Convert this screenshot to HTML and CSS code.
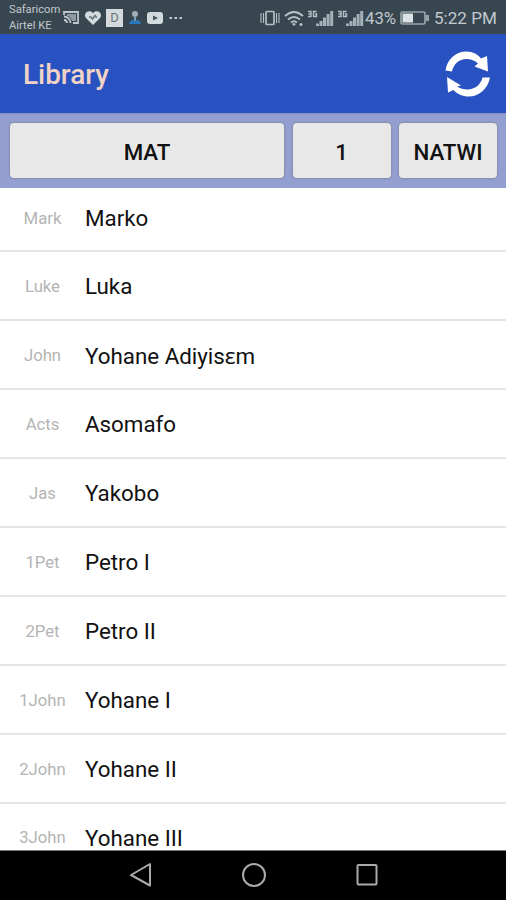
FILE: index.html
```html
<!DOCTYPE html>
<html lang="en">
<head>
<meta charset="utf-8">
<title>Library</title>
<link rel="stylesheet" href="styles.css">
</head>
<body>
<div class="screen">
  <div class="status">
    <div class="carrier"><span>Safaricom</span><span>Airtel KE</span></div>
    <div class="notifications">
      <svg width="18" height="16" viewBox="0 0 18 16"><path d="M2 5V2h14v11h-5M2 6.500a6.500 6.500 0 0 1 6.500 6.500M2 10a3 3 0 0 1 3 3" fill="none" stroke="#bdc5ca" stroke-width="1.800"/><path d="M5 4h9v7h-4Q8 6 5 6z" fill="#8d999f"/></svg>
      <svg width="18" height="16" viewBox="0 0 18 16"><path d="M9 15L2 8C-1 4 3 0 7 1.500L9 3l2-1.500C15 0 19 4 16 8z" fill="#d3dade"/><path d="M5 7h2l1.500 2L11 5.500l1 1.500h1" fill="none" stroke="#63717a" stroke-width="1.400"/></svg>
      <span class="letter">D</span>
      <svg width="16" height="16" viewBox="0 0 16 16"><circle cx="8" cy="4" r="3" fill="#9fb1b5"/><path d="M7 6h2v5H7z" fill="#7da0b4"/><path d="M2 14q1-4 5-4l1 2 1-2q4 0 5 4z" fill="#2877bd"/></svg>
      <svg class="video" width="18" height="14" viewBox="0 0 18 14"><rect x="1" y="1" width="16" height="12" rx="3" fill="#d3dade"/><path d="M7 4.500v5L12 7z" fill="#46545d"/></svg>
      <svg class="more" width="14" height="4" viewBox="0 0 14 4"><path d="M.5 2h2.500M5.500 2H8M10.500 2H13" stroke="#c3cbd0" stroke-width="2"/></svg>
    </div>
    <div class="system">
      <svg class="vibrate" width="20" height="16" viewBox="0 0 20 16"><rect x="6" y="1.500" width="8" height="13" rx="1" fill="none" stroke="#b5bfc5" stroke-width="1.700"/><path d="M3.500 3v10M16.500 3v10M1 3v10M19 3v10" stroke="#b5bfc5" stroke-width="1.100"/></svg>
      <svg class="wifi" width="20" height="17" viewBox="0 0 20 17"><path d="M1 6q9-8 18 0M4 9.500q6-5 12 0M7 12.500q3-2.500 6 0" fill="none" stroke="#b5bfc5" stroke-width="2"/><path d="M8 14l2-1 2 1-2 2z" fill="#b5bfc5"/><circle cx="17" cy="14.500" r="1.500" fill="#b5bfc5"/></svg>
      <svg class="signal" width="26" height="17" viewBox="0 0 26 17"><path d="M0 1.500h3v5H0M.5 4H3M8.500 1.500H5.500v5h3V4H7" fill="none" stroke="#b5bfc5" stroke-width="1.400"/><path d="M8 13.500h2.900V16H8zM11.500 11h3v5h-3zM15 7.500H18V16h-3zM18.600 4h3v12h-3zM22.200 1h3v15h-3z" fill="#a6b1b7"/></svg>
      <svg class="signal" width="26" height="17" viewBox="0 0 26 17"><path d="M0 1.500h3v5H0M.5 4H3M8.500 1.500H5.500v5h3V4H7" fill="none" stroke="#b5bfc5" stroke-width="1.400"/><path d="M8 13.500h2.900V16H8zM11.500 11h3v5h-3zM15 7.500H18V16h-3zM18.600 4h3v12h-3zM22.200 1h3v15h-3z" fill="#a6b1b7"/></svg>
      <span class="percent">43%</span>
      <svg class="battery" width="29" height="14" viewBox="0 0 29 14"><rect x="1" y="1" width="24" height="12" rx="1.500" fill="none" stroke="#98a5ac" stroke-width="1.700"/><path d="M2.500 2.500H13v9H2.500z" fill="#dce2e5"/><path d="M26 4h3v6h-3z" fill="#98a5ac"/></svg>
      <span class="time">5:22 PM</span>
    </div>
  </div>
  <header class="appbar">
    <h1>Library</h1>
    <svg width="46" height="46" viewBox="0 0 46 46"><path d="M1.500 19.500C3 8 12 .5 22.500 .5C29 .5 34 3.500 37 7.500L43 5L44 20.500L30.500 15.500L34 12.500C31 9.500 27 8 22.500 8C15 8 9.500 13 8 20.500ZM46 26.500C44 38 35 45.500 24.500 45.500C18.500 45.500 13 43 9.500 39L4 41.500L3 26L17 34.500L13 35.500C16 37.500 19.500 38.500 23.500 38.500C31 38.500 37 33.500 38.500 26.500Z" fill="#fff"/></svg>
  </header>
  <div class="picker">
    <button class="book">MAT</button>
    <button>1</button>
    <button>NATWI</button>
  </div>
  <ul class="books">
    <li><span class="abbr">Mark</span><span>Marko</span></li>
    <li><span class="abbr">Luke</span><span>Luka</span></li>
    <li><span class="abbr">John</span><span>Yohane Adiyisɛm</span></li>
    <li><span class="abbr">Acts</span><span>Asomafo</span></li>
    <li><span class="abbr">Jas</span><span>Yakobo</span></li>
    <li><span class="abbr">1Pet</span><span>Petro I</span></li>
    <li><span class="abbr">2Pet</span><span>Petro II</span></li>
    <li><span class="abbr">1John</span><span>Yohane I</span></li>
    <li><span class="abbr">2John</span><span>Yohane II</span></li>
    <li><span class="abbr">3John</span><span>Yohane III</span></li>
  </ul>
  <nav class="navbar">
    <svg width="24" height="26" viewBox="0 0 24 26"><path d="M21 2v21.500L2 13z" fill="none" stroke="#aaa" stroke-width="2" stroke-linejoin="round"/></svg>
    <svg width="26" height="26" viewBox="0 0 26 26"><circle cx="13" cy="13" r="11" fill="none" stroke="#aaa" stroke-width="2"/></svg>
    <svg width="24" height="26" viewBox="0 0 24 26"><rect x="2.500" y="3" width="19" height="19.500" rx="1" fill="none" stroke="#aaa" stroke-width="2"/></svg>
  </nav>
</div>
</body>
</html>
```
FILE: styles.css
```css
* { box-sizing: border-box; }
body { margin: 0; font-family: Roboto, "Noto Sans", sans-serif; }
svg { display: block; flex: none; }
.screen { width: 506px; height: 900px; display: flex; flex-direction: column; overflow: hidden; background: #fff; }
.status { flex: none; height: 34px; display: flex; align-items: center; padding: 2px 10px 0 9px; background: #38464f; color: #c0c9ce; }
.carrier { width: 53px; display: flex; flex-direction: column; font-size: 11.200px; line-height: 16px; white-space: nowrap; }
.notifications { display: flex; align-items: center; gap: 4px; }
.letter { width: 17px; height: 18px; background: #d5dadc; color: #68747b; font-size: 13px; line-height: 18px; text-align: center; }
.video { margin-left: -1px; }
.more { margin-left: 1px; }
.system { margin-left: auto; display: flex; align-items: center; white-space: nowrap; }
.wifi { margin-left: 4px; }
.signal { margin-left: 4px; }
.percent { width: 32px; margin-left: 1px; font-size: 16.800px; }
.battery { margin: 0 5px 0 3px; }
.time { width: 62px; font-size: 17.100px; }
.appbar { flex: none; height: 79px; display: flex; align-items: center; justify-content: space-between; padding: 0 16px 0 23px; background: #2852c1; }
.appbar h1 { margin: 3px 0 0; font-size: 27.900px; font-weight: 500; line-height: 32px; color: #f1d2c7; }
.picker { flex: none; height: 75px; display: grid; grid-template-columns: 274px 98px 98px; gap: 8.500px; padding: 10px 0 10px 10px; background: #949fd1; box-shadow: inset 0 2px 2px -1px #8590bd; }
.picker button { border: 0; border-radius: 4px; padding: 2px 0 0; background: #e8e8e8; color: #111; font: 500 22.300px Roboto, sans-serif; box-shadow: 0 0 2px 1px #858da8; }
.books { flex: 1; min-height: 0; margin: 0; padding: 0; overflow: hidden; list-style: none; }
.books li { height: 68.950px; display: flex; align-items: center; padding-top: 2px; border-bottom: 2px solid #e5e5e5; font-size: 22.350px; color: #111; }
.books li:first-child { height: 64px; padding: 0 0 2px; }
.abbr { width: 85px; text-align: center; font-size: 16.700px; color: #b4b4b4; }
.navbar { flex: none; height: 50px; display: flex; justify-content: center; align-items: center; gap: 88px; padding: 0 0 1px 1px; background: #000; border-top: 1px solid #777; }
```
